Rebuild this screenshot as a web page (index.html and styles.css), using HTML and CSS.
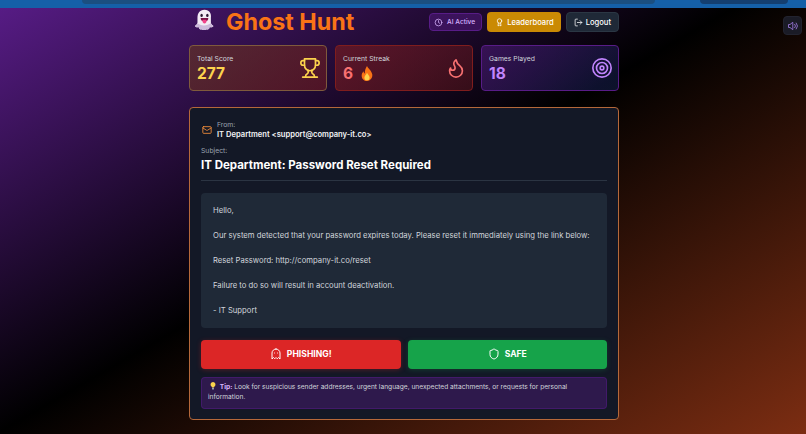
FILE: index.html
```html
<!DOCTYPE html>
<html lang="en">
<head>
  <meta charset="UTF-8" />
  <meta name="viewport" content="width=device-width, initial-scale=1.0"/>
  <title>Ghost Hunt</title>
  <link rel="stylesheet" href="styles.css">
</head>

<body>
  <div class="browser-strip">
    <div class="strip-pill strip-pill-wide"></div>
    <div class="strip-pill strip-pill-small"></div>
  </div>

  <button class="sound-button" aria-label="Sound">
    <svg class="icon" viewBox="0 0 24 24"><path d="M11 5 6 9H3v6h3l5 4z"/><path d="M15.500 8.500a5 5 0 0 1 0 7"/><path d="M18.500 6a9 9 0 0 1 0 12"/></svg>
  </button>

  <div class="container">
    <!-- Header -->
    <header class="top-bar">
      <div class="brand">
        <svg class="ghost-logo" viewBox="0 0 32 36">
          <path d="M16 1C8 1 5 7 5 14v7c0 2-2 4-4 5.500 1 2 4 2.500 6 1.500 0 3 2.500 5 5 3.500 1 2 6 2 7 0 2.500 1.500 5-.5 5-3.500 2 1 5 .5 6-1.500-2-1.500-4-3.500-4-5.500v-7C27 7 24 1 16 1z" fill="#f3ebf5"/>
          <path d="M5 22c0 2-2 3-4 4.500 1 2 4 2.500 6 1.500 0 3 2.500 5 5 3.500 1 2 6 2 7 0 2.500 1.500 5-.5 5-3.500 2 1 5 .5 6-1.500-2-1.500-4-2.500-4-4.500-5 5-17 5-21 0z" fill="#cdbbdb"/>
          <ellipse cx="11.500" cy="10" rx="1.900" ry="2.500" fill="#2b1a33"/>
          <ellipse cx="20.500" cy="10" rx="1.900" ry="2.500" fill="#2b1a33"/>
          <path d="M10 14h12c0 2.500-1 4-2.500 4.800H12.500C11 18 10 16.500 10 14z" fill="#7a1248"/>
          <path d="M12.500 17.500c1.500-1 5.500-1 7 0 0 3-1.500 5-3.500 5s-3.500-2-3.500-5z" fill="#f0448a"/>
        </svg>
        <h1>Ghost Hunt</h1>
      </div>
      <div class="top-actions">
        <span class="ai-badge">
          <svg class="icon" viewBox="0 0 24 24"><circle cx="12" cy="12" r="9"/><path d="M12 7v5l3 2"/></svg>
          AI Active
        </span>
        <button class="button button-gold">
          <svg class="icon" viewBox="0 0 24 24"><circle cx="12" cy="8" r="6"/><path d="M9 13.500 8 21l4-2 4 2-1-7.500"/></svg>
          Leaderboard
        </button>
        <button class="button button-dark">
          <svg class="icon" viewBox="0 0 24 24"><path d="M9 21H5a2 2 0 0 1-2-2V5a2 2 0 0 1 2-2h4"/><path d="m16 17 5-5-5-5"/><path d="M21 12H9"/></svg>
          Logout
        </button>
      </div>
    </header>

    <!-- Stats -->
    <section class="stats">
      <div class="stat stat-gold">
        <div>
          <p class="stat-label">Total Score</p>
          <p class="stat-value">277</p>
        </div>
        <svg class="stat-icon" viewBox="0 0 24 24"><path d="M6 9H4.500a2.500 2.500 0 0 1 0-5H6"/><path d="M18 9h1.500a2.500 2.500 0 0 0 0-5H18"/><path d="M4 22h16"/><path d="M10 14.660V17c0 .550-.470.980-.970 1.210C7.850 18.750 7 20.240 7 22"/><path d="M14 14.660V17c0 .550.470.980.970 1.210C16.150 18.750 17 20.240 17 22"/><path d="M18 2H6v7a6 6 0 0 0 12 0V2Z"/></svg>
      </div>
      <div class="stat stat-red">
        <div>
          <p class="stat-label">Current Streak</p>
          <p class="stat-value">6
            <svg class="flame-emoji" viewBox="0 0 16 20">
              <path d="M8 0c1 3 6 6 7 11 .8 5-3 9-7 9s-7.800-3.500-7-8.500C1.300 9.500 2.500 8 3.500 7c0 1.500.5 2.500 1.500 3C5 6 6 3 8 0z" fill="#f97316"/>
              <path d="M8 9c.5 2 3.500 3.500 3.500 6.500 0 2-1.500 3.500-3.500 3.500s-3.500-1.500-3.500-3.500C4.500 13 7 12 8 9z" fill="#fcd34d"/>
            </svg>
          </p>
        </div>
        <svg class="stat-icon" viewBox="0 0 24 24"><path d="M8.500 14.500A2.500 2.500 0 0 0 11 12c0-1.380-.500-2-1-3-1.072-2.143-.224-4.054 2-6 .500 2.500 2 4.900 4 6.500 2 1.600 3 3.500 3 5.500a7 7 0 1 1-14 0c0-1.153.433-2.294 1-3a2.500 2.500 0 0 0 2.500 2.500z"/></svg>
      </div>
      <div class="stat stat-purple">
        <div>
          <p class="stat-label">Games Played</p>
          <p class="stat-value">18</p>
        </div>
        <svg class="stat-icon" viewBox="0 0 24 24"><circle cx="12" cy="12" r="10"/><circle cx="12" cy="12" r="6"/><circle cx="12" cy="12" r="2"/></svg>
      </div>
    </section>

    <!-- Email card -->
    <main class="email-card">
      <div class="email-from">
        <svg class="mail-icon" viewBox="0 0 24 24"><rect x="2" y="4" width="20" height="16" rx="2"/><path d="m22 7-8.970 5.700a1.940 1.940 0 0 1-2.060 0L2 7"/></svg>
        <div>
          <p class="field-label">From:</p>
          <p class="from-value">IT Department &lt;support@company-it.co&gt;</p>
        </div>
      </div>
      <p class="field-label">Subject:</p>
      <h2 class="subject">IT Department: Password Reset Required</h2>

      <div class="email-body">
        <p>Hello,</p>
        <p>Our system detected that your password expires today. Please reset it immediately using the link below:</p>
        <p>Reset Password: http://company-it.co/reset</p>
        <p>Failure to do so will result in account deactivation.</p>
        <p>- IT Support</p>
      </div>

      <div class="choices">
        <button class="choice choice-phish">
          <svg class="icon" viewBox="0 0 24 24"><path d="M9 10h.01"/><path d="M15 10h.01"/><path d="M12 2a8 8 0 0 0-8 8v12l3-3 2.500 2.500L12 19l2.500 2.500L17 19l3 3V10a8 8 0 0 0-8-8z"/></svg>
          PHISHING!
        </button>
        <button class="choice choice-safe">
          <svg class="icon" viewBox="0 0 24 24"><path d="M20 13c0 5-3.500 7.500-7.660 8.950a1 1 0 0 1-.670-.010C7.500 20.500 4 18 4 13V6a1 1 0 0 1 1-1c2 0 4.500-1.200 6.240-2.720a1.170 1.170 0 0 1 1.520 0C14.510 3.810 17 5 19 5a1 1 0 0 1 1 1z"/></svg>
          SAFE
        </button>
      </div>

      <div class="tip">
        <svg class="bulb" viewBox="0 0 12 16">
          <path d="M6 0a5 5 0 0 0-3 9c.6.500 1 1.200 1 2h4c0-.8.4-1.500 1-2A5 5 0 0 0 6 0z" fill="#fcd34d"/>
          <rect x="4" y="11.500" width="4" height="3.500" rx="1" fill="#9ca3af"/>
        </svg>
        <strong>Tip:</strong> Look for suspicious sender addresses, urgent language, unexpected attachments, or requests for personal information.
      </div>
    </main>
  </div>
</body>
</html>
```

FILE: styles.css
```css
* {
  box-sizing: border-box;
}

html, body {
  height: 100%;
}

body {
  font-family: 'Inter', sans-serif;
  margin: 0;
  overflow: hidden;
  color: #fff;
  background: linear-gradient(150deg, #581c87 0%, #000 48%, #7c2d12 100%);
}

p, h1, h2 {
  margin: 0;
}

.browser-strip {
  height: 8px;
  background: #1560a8;
  display: flex;
  padding-left: 82px;
  overflow: hidden;
}

.strip-pill {
  height: 4px;
  background: #1b4f80;
  border-radius: 0 0 12px 12px;
}

.strip-pill-wide {
  width: 573px;
}

.strip-pill-small {
  width: 88px;
  margin-left: 45px;
  background: #143f70;
}

.icon {
  width: 12px;
  height: 12px;
  fill: none;
  stroke: currentColor;
  stroke-width: 2;
  stroke-linecap: round;
  stroke-linejoin: round;
  flex: none;
}

.sound-button {
  position: absolute;
  top: 16px;
  left: 783px;
  width: 19px;
  height: 19px;
  padding: 0;
  display: flex;
  align-items: center;
  justify-content: center;
  background: #1a1b26;
  color: #8b6cc4;
  border: 1px solid #22232f;
  border-radius: 4px;
}

.container {
  width: 430px;
  margin-left: 189px;
}

.top-bar {
  height: 37px;
  padding-bottom: 9px;
  display: flex;
  justify-content: space-between;
  align-items: center;
}

.brand {
  display: flex;
  align-items: center;
  gap: 11px;
  margin-left: 5px;
}

.ghost-logo {
  width: 21px;
  height: 23px;
  margin-top: -3px;
}

h1 {
  font-size: 23.300px;
  font-weight: 700;
  color: #f97316;
  line-height: 28px;
}

.top-actions {
  display: flex;
  align-items: center;
  gap: 5px;
}

.ai-badge {
  display: flex;
  align-items: center;
  gap: 4px;
  height: 18px;
  padding: 0 6px 0 4px;
  font-size: 6.600px;
  font-weight: 500;
  color: #d8b4fe;
  background: rgba(88, 28, 135, 0.5);
  border: 1px solid #581c87;
  border-radius: 4px;
}

.button {
  display: flex;
  align-items: center;
  gap: 3px;
  height: 20px;
  padding: 0 7px 0 8px;
  font-family: inherit;
  font-size: 7.600px;
  font-weight: 500;
  color: #fff;
  border: none;
  border-radius: 4px;
}

.button .icon,
.ai-badge .icon {
  width: 9px;
  height: 9px;
}

.button-gold {
  background: #ca8a04;
}

.button-dark {
  padding: 0 7px;
  background: #1f2937;
  border: 1px solid #2b3744;
}

.stats {
  display: grid;
  grid-template-columns: repeat(3, 1fr);
  gap: 8px;
}

.stat {
  height: 46px;
  padding: 0 5px 0 7px;
  display: flex;
  justify-content: space-between;
  align-items: center;
  border-radius: 4px;
  border: 1px solid;
}

.stat-label {
  font-size: 6.800px;
  line-height: 11px;
  color: #d1d5db;
}

.stat-value {
  font-size: 15.500px;
  font-weight: 700;
  line-height: 20px;
  display: flex;
  align-items: center;
  gap: 8px;
}

.stat-icon {
  width: 22px;
  height: 22px;
  fill: none;
  stroke: currentColor;
  stroke-width: 1.800;
  stroke-linecap: round;
  stroke-linejoin: round;
}

.flame-emoji {
  width: 12px;
  height: 15px;
}

.stat-gold {
  background: linear-gradient(135deg, rgba(113, 63, 18, 0.5), rgba(127, 29, 29, 0.5));
  border-color: #7f5a3c;
  color: #fcd34d;
}

.stat-red {
  background: linear-gradient(135deg, rgba(127, 29, 29, 0.6), rgba(127, 29, 29, 0.35));
  border-color: #7f1d1d;
  color: #f87171;
}

.stat-purple {
  background: linear-gradient(135deg, rgba(88, 28, 135, 0.5), rgba(30, 58, 138, 0.3));
  border-color: #581c87;
  color: #c084fc;
}

.email-card {
  margin-top: 16px;
  padding: 12px 11px 10px;
  background: #131826;
  border: 1px solid #b5683a;
  border-radius: 4px;
}

.email-from {
  display: flex;
  align-items: center;
  gap: 5px;
  margin-bottom: 6px;
}

.mail-icon {
  width: 10px;
  height: 10px;
  margin-left: 1px;
  fill: none;
  stroke: #fb923c;
  stroke-width: 2;
  stroke-linecap: round;
  stroke-linejoin: round;
}

.field-label {
  font-size: 6.800px;
  line-height: 10px;
  color: #9ca3af;
}

.from-value {
  font-size: 7.600px;
  font-weight: 600;
  line-height: 10px;
  color: #f3f4f6;
}

.subject {
  font-size: 11.500px;
  font-weight: 700;
  line-height: 16px;
  margin-top: 1px;
  padding-bottom: 7px;
  border-bottom: 1px solid #2b3442;
}

.email-body {
  margin-top: 12px;
  padding: 12px 12px 10px;
  background: #1f2937;
  border-radius: 4px;
  font-size: 7.700px;
  line-height: 12.500px;
  color: #d1d5db;
}

.email-body p + p {
  margin-top: 12.500px;
}

.choices {
  display: grid;
  grid-template-columns: 1fr 1fr;
  gap: 7px;
  margin-top: 12px;
}

.choice {
  height: 29px;
  display: flex;
  align-items: center;
  justify-content: center;
  gap: 5px;
  font-family: inherit;
  font-size: 8.600px;
  font-weight: 700;
  color: #fff;
  border: none;
  border-radius: 4px;
}

.choice-phish {
  background: #dc2626;
  box-shadow: 0 1px 5px rgba(220, 38, 38, 0.3);
}

.choice-safe {
  background: #16a34a;
  box-shadow: 0 1px 5px rgba(22, 163, 74, 0.25);
}

.tip {
  margin-top: 8px;
  height: 32px;
  padding: 4px 6px;
  font-size: 6.620px;
  line-height: 10px;
  color: #d1d5db;
  background: rgba(88, 28, 135, 0.4);
  border: 1px solid rgba(88, 28, 135, 0.5);
  border-radius: 4px;
}

.tip strong {
  color: #d8b4fe;
}

.bulb {
  width: 6px;
  height: 8px;
  margin: 0 2px;
  vertical-align: -1px;
}
```
